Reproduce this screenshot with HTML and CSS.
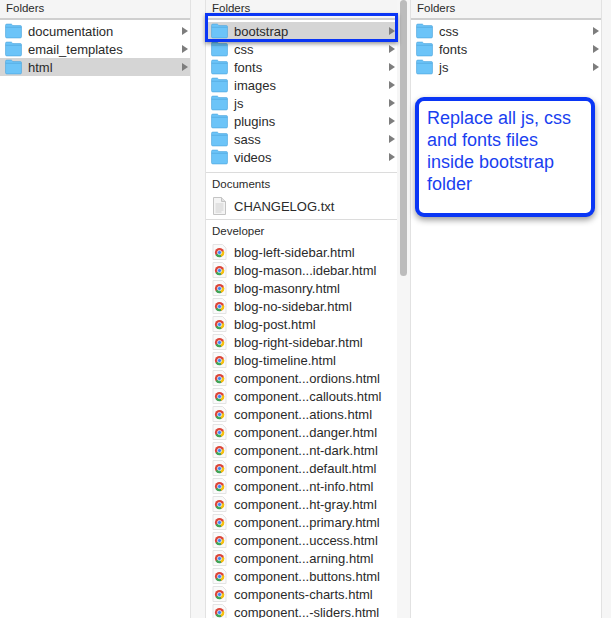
FILE: index.html
```html
<!DOCTYPE html>
<html lang="en">
<head>
    <meta charset="UTF-8">
    <title>Finder - html folder</title>
    <link rel="stylesheet" href="styles.css">
</head>
<body>
    <svg class="defs" width="0" height="0">
        <symbol id="folder" viewBox="0 0 16 15">
            <path d="M0.5 2.2 Q0.5 1 1.7 1 H5.6 Q6.3 1 6.8 1.7 L7.4 2.4 H14.4 Q15.5 2.4 15.5 3.5 V12.8 Q15.5 14 14.4 14 H1.7 Q0.5 14 0.5 12.8 Z" fill="#6cc4f8" stroke="#4fa6dc" stroke-width=".6"/>
            <path d="M0.6 4 H15.4" stroke="#4fa6dc" stroke-width=".6"/>
        </symbol>
        <symbol id="txt" viewBox="0 0 14 18">
            <path d="M1 .5 H9 L13 4.5 V17.5 H1 Z" fill="#f4f4f4" stroke="#c4c4c4"/>
            <path d="M9 .5 V4.5 H13" fill="#e2e2e2" stroke="#c4c4c4"/>
            <path d="M3 7 H11 M3 9 H11 M3 11 H11 M3 13 H11 M3 15 H9" stroke="#d0d0d0"/>
        </symbol>
        <symbol id="chrome" viewBox="0 0 14 16">
            <path d="M.5 .5 H10 L13.5 4 V15.5 H.5 Z" fill="#fafafa" stroke="#e4e4e4"/>
            <circle cx="7" cy="8.5" r="4.6" fill="#dc4437"/>
            <path d="M7 8.5 L3 11 A4.6 4.6 0 0 0 9 12.7 Z" fill="#3aa757"/>
            <path d="M7 8.5 L11.4 7 A4.6 4.6 0 0 1 9 12.7 Z" fill="#f4c20d"/>
            <circle cx="7" cy="8.5" r="2.1" fill="#4285f4" stroke="#fff" stroke-width=".7"/>
        </symbol>
    </svg>

    <div class="browser">
        <div class="column col-left">
            <div class="col-head">Folders</div>
            <ul class="list">
                <li class="row"><svg class="ico"><use href="#folder"/></svg><span>documentation</span><i class="arrow"></i></li>
                <li class="row"><svg class="ico"><use href="#folder"/></svg><span>email_templates</span><i class="arrow"></i></li>
                <li class="row selected"><svg class="ico"><use href="#folder"/></svg><span>html</span><i class="arrow"></i></li>
            </ul>
        </div>

        <div class="column col-mid">
            <div class="col-head">Folders</div>
            <ul class="list">
                <li class="row selected"><svg class="ico"><use href="#folder"/></svg><span>bootstrap</span><i class="arrow"></i></li>
                <li class="row"><svg class="ico"><use href="#folder"/></svg><span>css</span><i class="arrow"></i></li>
                <li class="row"><svg class="ico"><use href="#folder"/></svg><span>fonts</span><i class="arrow"></i></li>
                <li class="row"><svg class="ico"><use href="#folder"/></svg><span>images</span><i class="arrow"></i></li>
                <li class="row"><svg class="ico"><use href="#folder"/></svg><span>js</span><i class="arrow"></i></li>
                <li class="row"><svg class="ico"><use href="#folder"/></svg><span>plugins</span><i class="arrow"></i></li>
                <li class="row"><svg class="ico"><use href="#folder"/></svg><span>sass</span><i class="arrow"></i></li>
                <li class="row"><svg class="ico"><use href="#folder"/></svg><span>videos</span><i class="arrow"></i></li>
            </ul>
            <div class="section">Documents</div>
            <ul class="list list-docs">
                <li class="row"><svg class="ico ico-txt"><use href="#txt"/></svg><span>CHANGELOG.txt</span></li>
            </ul>
            <div class="section">Developer</div>
            <ul class="list list-dev" id="devList"></ul>
        </div>

        <div class="scroller"><div class="thumb"></div></div>

        <div class="column col-right">
            <div class="col-head">Folders</div>
            <ul class="list">
                <li class="row"><svg class="ico"><use href="#folder"/></svg><span>css</span><i class="arrow"></i></li>
                <li class="row"><svg class="ico"><use href="#folder"/></svg><span>fonts</span><i class="arrow"></i></li>
                <li class="row"><svg class="ico"><use href="#folder"/></svg><span>js</span><i class="arrow"></i></li>
            </ul>
        </div>
    </div>

    <div class="mark-box"></div>
    <div class="note">Replace all js, css and fonts files inside bootstrap folder</div>

    <script>
        const files = [
            'blog-left-sidebar.html', 'blog-mason...idebar.html', 'blog-masonry.html',
            'blog-no-sidebar.html', 'blog-post.html', 'blog-right-sidebar.html',
            'blog-timeline.html', 'component...ordions.html', 'component...callouts.html',
            'component...ations.html', 'component...danger.html', 'component...nt-dark.html',
            'component...default.html', 'component...nt-info.html', 'component...ht-gray.html',
            'component...primary.html', 'component...uccess.html', 'component...arning.html',
            'component...buttons.html', 'components-charts.html', 'component...-sliders.html'
        ];
        const devList = document.getElementById('devList');
        files.forEach(function(name) {
            const li = document.createElement('li');
            li.className = 'row';
            li.innerHTML = '<svg class="ico ico-file"><use href="#chrome"/></svg><span>' + name + '</span>';
            devList.appendChild(li);
        });
    </script>
</body>
</html>
```
FILE: styles.css
```css
html, body {
    margin: 0;
    height: 100%;
    overflow: hidden;
}
body {
    position: relative;
    font-family: "Liberation Sans", Arial, sans-serif;
    font-size: 13px;
    color: #2a2a2a;
    background-color: #f6f6f6;
}
.defs {
    position: absolute;
}
.browser {
    display: flex;
    height: 618px;
}
.column {
    background-color: white;
    overflow: hidden;
}
.col-left {
    width: 190px;
    border-right: 1px solid #e2e2e2;
    margin-right: 14px;
}
.col-mid {
    width: 191px;
    border-left: 1px solid #e2e2e2;
}
.col-right {
    width: 190px;
    margin-left: 0;
    border-left: 1px solid #e2e2e2;
    border-right: 1px solid #e2e2e2;
}
.scroller {
    width: 13px;
    background-color: #f6f6f6;
    padding: 0 3px 0 3px;
    box-sizing: border-box;
}
.thumb {
    height: 276px;
    background-color: #bcbcbc;
    border-radius: 4px;
}
.col-head {
    height: 18px;
    line-height: 17px;
    padding-left: 6px;
    font-size: 11.5px;
    background-color: #f5f5f5;
    border-bottom: 2px solid #cfcfcf;
}
.list {
    list-style: none;
    margin: 0;
    padding: 2px 0 0;
}
.row {
    position: relative;
    display: flex;
    align-items: center;
    height: 18px;
    padding-left: 5px;
}
.row span {
    margin-left: 6px;
}
.selected {
    background-color: #d5d5d5;
}
.ico {
    width: 17px;
    height: 16px;
    flex: none;
}
.ico-txt {
    width: 17px;
    height: 18px;
}
.ico-file {
    width: 17px;
    height: 16px;
}
.arrow {
    position: absolute;
    right: 2px;
    top: 5px;
    border-left: 6px solid #7d7d7d;
    border-top: 4px solid transparent;
    border-bottom: 4px solid transparent;
}
.section {
    margin-top: 6px;
    height: 20px;
    line-height: 22px;
    padding-left: 6px;
    font-size: 11.5px;
    border-top: 1px solid #dcdcdc;
}
.list-docs {
    padding: 3px 0 2px;
}
.list-docs .row {
    height: 20px;
}
.list-docs + .section {
    margin-top: 1px;
}
.list-dev {
    padding-top: 3px;
}
.mark-box {
    position: absolute;
    left: 205px;
    top: 13px;
    width: 187px;
    height: 23px;
    border: 3px solid #0a36f5;
    box-shadow: 0 2px 4px rgba(0, 0, 0, 0.4);
}
.note {
    position: absolute;
    left: 415px;
    top: 97px;
    width: 180px;
    height: 120px;
    box-sizing: border-box;
    padding: 6px 8px;
    background-color: white;
    border: 4px solid #0a36f5;
    border-radius: 9px;
    box-shadow: 0 3px 6px rgba(0, 0, 0, 0.4);
    color: #1a3ff0;
    font-size: 18px;
    line-height: 22px;
}
```
